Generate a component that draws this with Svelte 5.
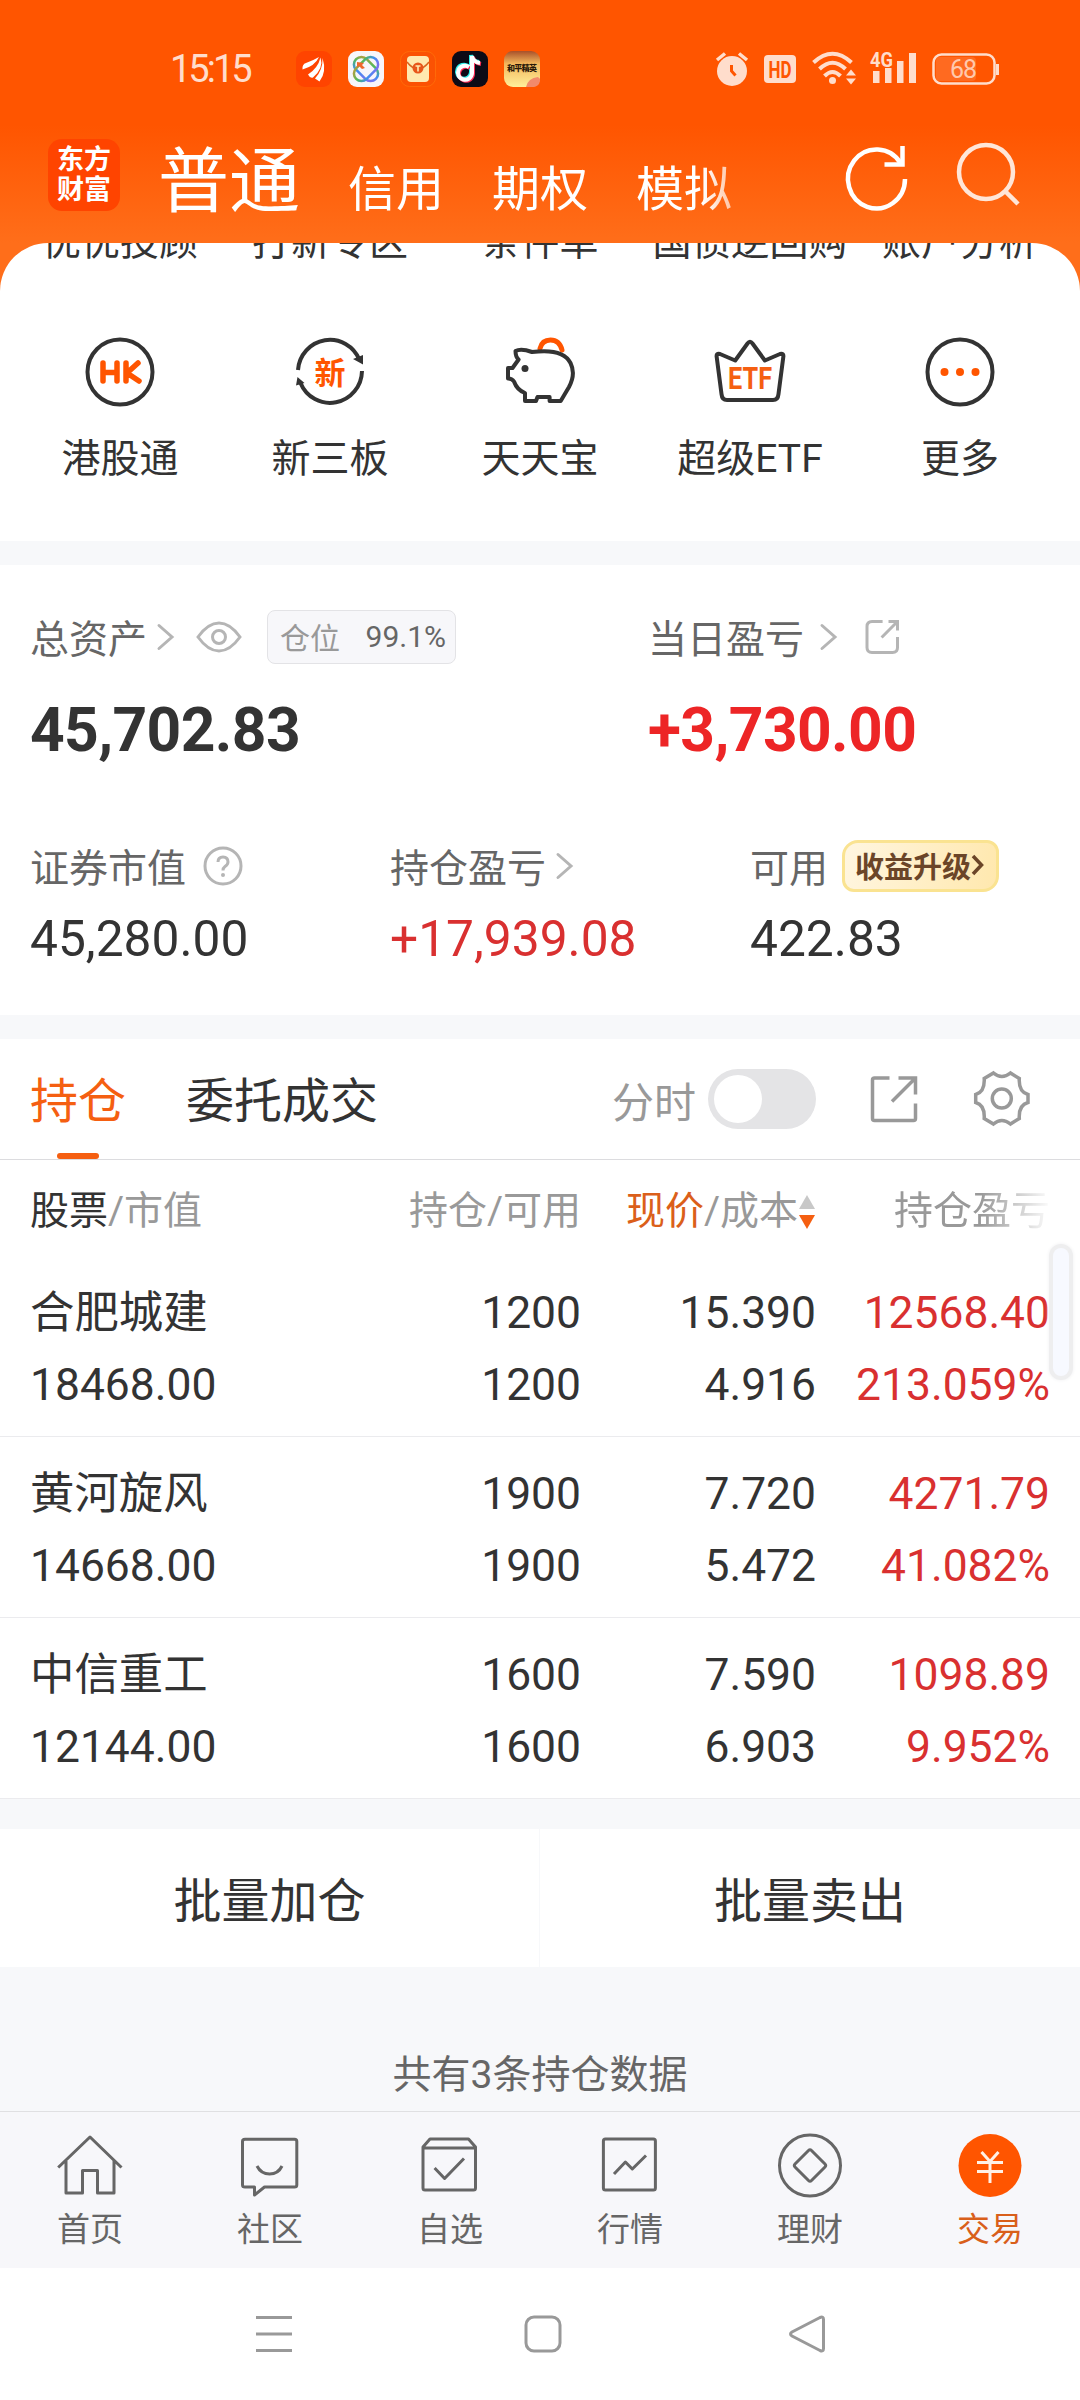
<script>
	const accounts = ['普通', '信用', '期权', '模拟'];
	const hiddenShortcuts = ['优优投顾', '打新专区', '条件单', '国债逆回购', '账户分析'];

	const shortcuts = [
		{ icon: 'hk', label: '港股通' },
		{ icon: 'xin', label: '新三板' },
		{ icon: 'pig', label: '天天宝' },
		{ icon: 'etf', label: '超级ETF' },
		{ icon: 'more', label: '更多' }
	];

	const holdings = [
		{ name: '合肥城建', value: '18468.00', held: 1200, usable: 1200, price: '15.390', cost: '4.916', profit: '12568.40', rate: '213.059%' },
		{ name: '黄河旋风', value: '14668.00', held: 1900, usable: 1900, price: '7.720', cost: '5.472', profit: '4271.79', rate: '41.082%' },
		{ name: '中信重工', value: '12144.00', held: 1600, usable: 1600, price: '7.590', cost: '6.903', profit: '1098.89', rate: '9.952%' }
	];

	const tabs = [
		{ icon: 'home', label: '首页' },
		{ icon: 'chat', label: '社区' },
		{ icon: 'pick', label: '自选' },
		{ icon: 'market', label: '行情' },
		{ icon: 'wealth', label: '理财' },
		{ icon: 'trade', label: '交易' }
	];

	let activeAccount = $state('普通');
	let activeTab = $state('trade');
</script>

{#snippet chevron()}
	<svg class="chevron" width="18" height="28" viewBox="0 0 18 28">
		<path d="M2 2.5L15 14L2 25.5" />
	</svg>
{/snippet}

<main>
	<div class="top">
		<div class="status">
			<span class="time">15:15</span>
			<div class="apps">
				<svg width="36" height="36" viewBox="0 0 36 36">
					<rect width="36" height="36" rx="9" fill="#ff4400" />
					<path d="M6.500 18.500Q6 13 10 12Q18 9 23 6Q19 15 6.500 18.500ZM12 23.500Q22 17 24.500 6.500Q28 17 17 26.500Q14 27.500 12 23.500ZM19 27.500Q27 19 26.500 7Q31 21 23.500 30.500Z" fill="#fff" />
				</svg>
				<svg width="36" height="36" viewBox="0 0 36 36">
					<defs>
						<linearGradient id="loop" gradientUnits="userSpaceOnUse" x1="10" y1="4" x2="24" y2="32">
							<stop offset="0" stop-color="#ff8a2e" />
							<stop offset="0.35" stop-color="#52b95a" />
							<stop offset="0.65" stop-color="#3f8df0" />
							<stop offset="1" stop-color="#a45cf0" />
						</linearGradient>
					</defs>
					<rect width="36" height="36" rx="9" fill="#f7f5fa" />
					<g fill="none" stroke="url(#loop)" stroke-width="2.500">
						<rect x="4" y="10.500" width="28" height="15" rx="7.500" transform="rotate(45 18 18)" />
						<rect x="4" y="10.500" width="28" height="15" rx="7.500" transform="rotate(-45 18 18)" />
					</g>
					<path d="M9 11L16 12L14 14L17 17L14 18L11 15L9 17Z" fill="#f0672c" />
				</svg>
				<svg width="36" height="36" viewBox="0 0 36 36">
					<rect x="0.5" y="0.5" width="35" height="35" rx="9" fill="#fb5203" stroke="#ff6a08" />
					<rect x="7" y="5" width="22" height="26" rx="4" fill="#ffe9b0" />
					<path d="M7 11Q18 25 29 11" fill="none" stroke="#d9641f" stroke-width="1.5" />
					<circle cx="18" cy="17" r="5.5" fill="#e8561b" />
					<path d="M15.5 15H20.5M18 15V20.5" stroke="#ffe9b0" stroke-width="1.6" />
				</svg>
				<svg width="36" height="36" viewBox="0 0 36 36">
					<rect width="36" height="36" rx="9" fill="#0d0b16" />
					<g fill="none" stroke-width="4">
						<path d="M17 16A7 7 0 1 0 20 22V5Q21 11 28 12" stroke="#2ef0ea" transform="translate(-1 -1)" />
						<path d="M17 16A7 7 0 1 0 20 22V5Q21 11 28 12" stroke="#fb2c55" transform="translate(1 1)" />
						<path d="M17 16A7 7 0 1 0 20 22V5Q21 11 28 12" stroke="#fff" />
					</g>
				</svg>
				<svg width="36" height="36" viewBox="0 0 36 36">
					<defs>
						<linearGradient id="game" x1="0" y1="0" x2="0" y2="1">
							<stop offset="0" stop-color="#a8502a" />
							<stop offset="0.35" stop-color="#f3b65c" />
							<stop offset="1" stop-color="#fff09a" />
						</linearGradient>
					</defs>
					<rect width="36" height="36" rx="9" fill="url(#game)" />
					<path d="M22 36Q24 27 34 26L36 28V30Q35 36 28 36Z" fill="#f28a6c" />
					<text x="3" y="20" class="game" textLength="30">和平精英</text>
				</svg>
			</div>
			<div class="signals">
				<svg width="32" height="36" viewBox="0 0 32 36">
					<circle cx="16" cy="20" r="15" fill="#ffddcc" />
					<path d="M1 9L9 2.5M31 9L23 2.5" stroke="#ffddcc" stroke-width="3.5" />
					<path d="M15.500 14V20L19.500 24.500" fill="none" stroke="#ff5500" stroke-width="3" />
				</svg>
				<svg class="hd" width="32" height="36" viewBox="0 0 32 36">
					<rect y="4" width="32" height="28" rx="4" fill="#ffddcc" />
					<text x="4.500" y="26.500" class="hd-text" textLength="23" lengthAdjust="spacingAndGlyphs">HD</text>
				</svg>
				<svg class="wifi" width="45" height="36" viewBox="0 0 45 36">
					<g fill="none" stroke="#ffddcc" stroke-width="4">
						<path d="M1.500 11.500Q20.500 -6 39.500 11.500" />
						<path d="M7.500 18Q20.500 5.500 33.500 18" />
						<path d="M12.500 25Q20.500 17 28.500 25" />
					</g>
					<circle cx="20.500" cy="29.500" r="3.500" fill="#ffddcc" />
					<path d="M34 24.500L39 18.500L44 24.500ZM34 27.500L39 33.500L44 27.500Z" fill="#ffddcc" />
				</svg>
				<svg width="46" height="36" viewBox="0 0 46 36">
					<text x="0" y="15.500" class="net" textLength="23" lengthAdjust="spacingAndGlyphs">4G</text>
					<path d="M3 20H9.500V32H3ZM15 17H21.500V32H15ZM27 10H33.500V32H27ZM39 2H46V32H39Z" fill="#ffddcc" />
				</svg>
				<svg width="67" height="36" viewBox="0 0 67 36">
					<rect x="4" y="6" width="40" height="24" rx="4" fill="#ff6a20" />
					<rect x="1.500" y="3.500" width="61" height="29" rx="8" fill="none" stroke="#ffddcc" stroke-width="2.500" />
					<path d="M65.500 13V24" stroke="#ffddcc" stroke-width="3" />
					<text x="18" y="27" class="battery" textLength="27">68</text>
				</svg>
			</div>
		</div>

		<header>
			<div class="logo">东方<br />财富</div>
			<nav class="accounts">
				{#each accounts as account}
					<button class="account" class:active={account === activeAccount} onclick={() => (activeAccount = account)}>{account}</button>
				{/each}
			</nav>
			<svg width="66" height="66" viewBox="0 0 66 66" class="refresh">
				<path d="M57.500 20A28.500 29.500 0 1 0 62 36" />
				<path d="M59.500 3V21.500H41.500" />
			</svg>
			<svg width="66" height="66" viewBox="0 0 66 66" class="search">
				<circle cx="29" cy="29" r="27" />
				<path d="M48 48L61 61" />
			</svg>
		</header>

		<section class="sheet">
			<div class="grid clipped">
				{#each hiddenShortcuts as label}
					<span>{label}</span>
				{/each}
			</div>
			<div class="grid">
				{#each shortcuts as item}
					<div class="shortcut">
						<svg width="70" height="70" viewBox="0 0 70 70" fill="none" stroke="#333" stroke-width="4" stroke-linejoin="round">
							{#if item.icon === 'hk'}
								<circle cx="35" cy="35" r="32.500" />
								<path d="M18 26V44M32 26V44M18 35.500H32M41 26V44M53 26L42 36L54 44" stroke="#ff5500" stroke-width="5.500" stroke-linecap="round" />
							{:else if item.icon === 'xin'}
								<path d="M3 33A32 32.500 0 0 1 64.500 23M67 34A32 32.500 0 0 1 5.500 46" />
								<path d="M58 22L68 18V27.500ZM2.500 40L9.500 46L1 48.500Z" fill="#333" stroke="none" />
								<text x="35" y="47" class="xin">新</text>
							{:else if item.icon === 'pig'}
								<path d="M35 11.500Q37 3 45.500 3Q54.500 3 57 13" stroke="#ff5500" stroke-width="5" stroke-linecap="round" />
								<path d="M10.500 14Q16 11 27 15Q58 11 65.500 26Q71 37 64 50L55.700 64H44.600V60H32.500L31 64H20V56Q12 53 9 44.500Q7 41.500 3 41.500V31H7.500L13.600 22.500Q10.500 20 10.500 14Z" />
								<circle cx="20" cy="31.500" r="3.500" fill="#333" stroke="none" />
							{:else if item.icon === 'etf'}
								<path d="M5 17L20.200 23.500L32.500 6.500Q35 3 37.500 6.500L49.900 23.500L65 17Q69 16 68.300 20L63.500 57Q63 63 58 63H12Q7 63 6.500 57L1.700 20Q1 16 5 17Z" />
								<text x="13" y="52" class="etf" textLength="44" lengthAdjust="spacingAndGlyphs">ETF</text>
							{:else}
								<circle cx="35" cy="35" r="32.500" />
								<g fill="#ff5500" stroke="none">
									<circle cx="19.500" cy="35" r="4" />
									<circle cx="35" cy="35" r="4" />
									<circle cx="50.500" cy="35" r="4" />
								</g>
							{/if}
						</svg>
						<span>{item.label}</span>
					</div>
				{/each}
			</div>
		</section>
	</div>

	<section class="assets">
		<div class="summary">
			<div>
				<div class="label">
					<span>总资产</span>
					{@render chevron()}
					<svg class="eye" width="46" height="34" viewBox="0 0 46 34">
						<path d="M2 17Q12 3 23 3T44 17Q34 31 23 31T2 17Z" />
						<circle cx="23" cy="17" r="6.500" />
					</svg>
					<span class="position"><i>仓位</i>99.1%</span>
				</div>
				<div class="total">45,702.83</div>
			</div>
			<div>
				<div class="label today">
					<span>当日盈亏</span>
					{@render chevron()}
					<svg class="share" width="35" height="36" viewBox="0 0 35 36">
						<path d="M17.600 2.500H7Q2 2.500 2 7.500V28.500Q2 33.500 7 33.500H27.500Q32.500 33.500 32.500 28.500V18" />
						<path d="M16.600 18.500L31.500 3.500M23.500 2.500H32.500V11.500" />
					</svg>
				</div>
				<div class="total up">+3,730.00</div>
			</div>
		</div>
		<div class="details">
			<div>
				<div class="label">
					<span>证券市值</span>
					<svg class="help" width="40" height="40" viewBox="0 0 40 40">
						<circle cx="20" cy="20" r="18" />
						<path d="M15 16Q15 11 20 11T25 16Q25 18.500 22 20.500Q20 22 20 24.500" />
						<circle class="dot" cx="20" cy="29" r="2" />
					</svg>
				</div>
				<div class="amount">45,280.00</div>
			</div>
			<div>
				<div class="label"><span>持仓盈亏</span>{@render chevron()}</div>
				<div class="amount up">+17,939.08</div>
			</div>
			<div>
				<div class="label">
					<span>可用</span>
					<div class="upgrade">
						收益升级
						<svg width="13" height="22" viewBox="0 0 13 22"><path d="M2 2L10.500 11L2 20" /></svg>
					</div>
				</div>
				<div class="amount">422.83</div>
			</div>
		</div>
	</section>

	<section class="positions">
		<div class="bar">
			<span class="view active">持仓</span>
			<span class="view">委托成交</span>
			<span class="minute">分时</span>
			<span class="toggle"></span>
			<svg class="export" width="48" height="48" viewBox="0 0 48 48">
				<path d="M19.500 3H4.500Q2.500 3 2.500 5V43.500Q2.500 45.500 4.500 45.500H43.500Q45.500 45.500 45.500 43.500V28.500" />
				<path d="M28.500 3H45.500V19.500M22 26.500L44 4.500" />
			</svg>
			<svg class="gear" width="56" height="56" viewBox="0 0 56 56">
				<path d="M19.500 2Q27.800 9 36.400 2L45.300 7.500Q44.500 21 54 23.500V31.500Q44.500 34 45.300 47.500L36.400 53Q27.800 46 19.500 53L10.200 47.500Q11 34 1.700 31.500V23.500Q11 21 10.200 7.500Z" />
				<circle cx="27.800" cy="27.500" r="9.500" />
			</svg>
		</div>

		<div class="row head">
			<span><b>股票</b>/市值</span>
			<span>持仓/可用</span>
			<span class="sort">
				<em>现价</em>/成本
				<svg width="18" height="36" viewBox="0 0 18 36">
					<path d="M1 15L9 1L17 15Z" fill="#c8c8c8" />
					<path d="M1 21L9 35L17 21Z" fill="#f55f11" />
				</svg>
			</span>
			<span class="faded">持仓盈亏</span>
		</div>

		{#each holdings as stock}
			<div class="row holding">
				<div><p>{stock.name}</p><p>{stock.value}</p></div>
				<div><p>{stock.held}</p><p>{stock.usable}</p></div>
				<div><p>{stock.price}</p><p>{stock.cost}</p></div>
				<div class="gain"><p>{stock.profit}</p><p>{stock.rate}</p></div>
			</div>
		{/each}
		<div class="handle"></div>
	</section>

	<div class="batch">
		<button>批量加仓</button>
		<button>批量卖出</button>
	</div>
	<p class="count">共有3条持仓数据</p>

	<nav class="tabs">
		{#each tabs as tab}
			<button class="tab" class:active={tab.icon === activeTab} onclick={() => (activeTab = tab.icon)}>
				<svg width="66" height="66" viewBox="0 0 66 66" fill="none" stroke="#666" stroke-width="3" stroke-linejoin="round">
					{#if tab.icon === 'home'}
						<path d="M1.200 32.500L33 2L64.500 32.500M9 26V58H25.500V35.500H40.500V58H57V26" />
					{:else if tab.icon === 'chat'}
						<path d="M8 4.300H57.500Q59.800 4.300 59.800 6.500V50Q59.800 52 57.500 52H27.500L17.500 60V52H8Q5.500 52 5.500 50V6.500Q5.500 4.300 8 4.300Z" />
						<path d="M20 31Q24 39 32.600 39T45 31" />
					{:else if tab.icon === 'pick'}
						<path d="M13 4H51.500L58.500 12V53Q58.500 55 56.500 55H8Q6 55 6 53V12ZM6 13H58.500M17.600 33L27.600 43.500L47 23.500" />
					{:else if tab.icon === 'market'}
						<rect x="6.400" y="4" width="52" height="51" rx="2" />
						<path d="M17 39L28.400 27L35.300 34L49 20.500" />
					{:else if tab.icon === 'wealth'}
						<circle cx="33" cy="30.500" r="30.500" />
						<path d="M31.500 15.500Q33 14 34.500 15.500L48 29Q49.500 30.500 48 32L34.500 45.500Q33 47 31.500 45.500L18 32Q16.500 30.500 18 29Z" />
					{:else}
						<circle cx="33" cy="30.500" r="31.500" fill="#ff5500" stroke="none" />
						<path d="M24.500 17L33 26.500L41.500 17M33 26V48M20 27.500H46M20 36.500H46" stroke="#fff0e6" />
					{/if}
				</svg>
				{tab.label}
			</button>
		{/each}
	</nav>

	<div class="system">
		<svg width="36" height="38" viewBox="0 0 36 38"><path d="M0 2.500H36M0 19H36M0 35.500H36" /></svg>
		<svg class="home" width="38" height="38" viewBox="0 0 38 38"><rect x="2" y="2" width="34" height="34" rx="8" /></svg>
		<svg width="38" height="38" viewBox="0 0 38 38"><path d="M32 2.500Q35.500 1 35.500 4.500V33.500Q35.500 37 32 35.500L4 21Q1 19 4 17Z" /></svg>
	</div>
</main>

<style>
	:global(body) {
		margin: 0;
		background: #fff;
	}

	main {
		width: 1080px;
		height: 2400px;
		display: flex;
		flex-direction: column;
		overflow: hidden;
		background: #f7f8fa;
		color: #333;
		font-family: Roboto, 'Noto Sans CJK SC', sans-serif;
		font-size: 39px;
		font-weight: 400;
	}

	svg {
		flex: none;
		display: block;
		overflow: visible;
	}

	p {
		margin: 0;
	}

	button {
		padding: 0;
		border: none;
		background: none;
		color: inherit;
		font: inherit;
	}

	.top {
		height: 541px;
		background: linear-gradient(#ff5500 125px, #ff6e1a 243px);
	}

	.status {
		height: 101px;
		padding: 37px 81px 0 170px;
		box-sizing: border-box;
		display: flex;
		align-items: center;
		color: #ffddcc;
	}

	.time {
		width: 126px;
		font-size: 38px;
		letter-spacing: -3px;
	}

	.apps {
		display: flex;
		gap: 16px;
	}

	.signals {
		display: flex;
		gap: 16px;
		margin-left: auto;
	}

	.wifi {
		margin-right: -3px;
	}

	.game {
		font-size: 8px;
		font-weight: 900;
		fill: #2a1808;
	}

	.hd-text {
		font-size: 23px;
		font-weight: 700;
		fill: #ff5500;
	}

	.net {
		font-size: 21px;
		font-weight: 700;
		fill: #ffddcc;
	}

	.battery {
		font-size: 25px;
		fill: #ffc9ad;
	}

	header {
		height: 142px;
		padding: 0 57px 0 48px;
		box-sizing: border-box;
		display: flex;
		align-items: center;
		color: #fff;
	}

	.logo {
		width: 72px;
		height: 72px;
		margin-top: 6px;
		padding-top: 6px;
		box-sizing: border-box;
		border-radius: 14px;
		background: #ff4400;
		font-size: 27px;
		font-weight: 700;
		line-height: 30px;
		text-align: center;
	}

	.accounts {
		width: 590px;
		margin: 20px auto 0 38px;
		display: flex;
		align-items: baseline;
		gap: 48px;
		white-space: nowrap;
		mask-image: linear-gradient(to right, #000 545px, rgba(0, 0, 0, 0.4) 590px);
	}

	.account {
		flex: none;
		font-size: 48px;
		line-height: 70px;
	}

	.account.active {
		font-size: 71px;
		line-height: 110px;
	}

	.refresh {
		margin-top: 8px;
		margin-right: 48px;
		fill: none;
		stroke: #fff;
		stroke-width: 4.5;
	}

	.search {
		margin-top: 8px;
		fill: none;
		stroke: #ffe6d8;
		stroke-width: 4.5;
	}

	.sheet {
		height: 298px;
		border-radius: 48px 48px 0 0;
		background: #fff;
		overflow: hidden;
	}

	.grid {
		padding: 0 15px;
		display: grid;
		grid-template-columns: repeat(5, 210px);
		text-align: center;
		white-space: nowrap;
		line-height: 40px;
	}

	.clipped {
		margin: -21px 0 75px;
	}

	.clipped span {
		margin: 0 -10px;
	}

	.shortcut {
		display: flex;
		flex-direction: column;
		align-items: center;
		gap: 32px;
	}

	.xin {
		font-size: 31px;
		font-weight: 700;
		fill: #ff5500;
		stroke: none;
		text-anchor: middle;
	}

	.etf {
		font-size: 32px;
		font-weight: 700;
		fill: #f55f11;
		stroke: none;
	}

	.assets {
		height: 450px;
		margin-top: 24px;
		padding: 45px 30px 0;
		box-sizing: border-box;
		background: #fff;
	}

	.summary {
		display: grid;
		grid-template-columns: 618px 1fr;
	}

	.label {
		height: 54px;
		display: flex;
		align-items: center;
		color: #666;
		white-space: nowrap;
	}

	.label > span:first-child {
		padding-bottom: 3px;
	}

	.chevron {
		margin-left: 10px;
		fill: none;
		stroke: #b5b5b5;
		stroke-width: 3;
		stroke-linecap: round;
	}

	.today .chevron {
		margin-left: 16px;
	}

	.eye {
		margin-left: 21px;
	}

	.share {
		margin-left: 27px;
	}

	.help {
		margin-left: 17px;
	}

	.eye,
	.share,
	.help {
		fill: none;
		stroke: #b5b5b5;
		stroke-width: 3;
	}

	.help .dot {
		fill: #b5b5b5;
		stroke: none;
	}

	.position {
		width: 189px;
		height: 54px;
		margin-left: 25px;
		padding: 0 9px 2px 12px;
		box-sizing: border-box;
		display: flex;
		align-items: center;
		justify-content: space-between;
		border: 1px solid #e3e3e6;
		border-radius: 8px;
		background: #f7f7fa;
		font-size: 30px;
	}

	.position i {
		color: #999;
		font-style: normal;
	}

	.total {
		margin-top: 32px;
		font-size: 60.5px;
		font-weight: 700;
		letter-spacing: -0.6px;
		line-height: 70px;
	}

	.total.up {
		color: #ed2526;
	}

	.amount.up,
	.gain {
		color: #d93030;
	}

	.details {
		margin-top: 73px;
		display: grid;
		grid-template-columns: 360px 360px 1fr;
	}

	.amount {
		margin-top: 16px;
		font-size: 49.7px;
		line-height: 61px;
	}

	.upgrade {
		width: 157px;
		height: 52px;
		margin-left: 14px;
		padding: 0 0 2px 10px;
		box-sizing: border-box;
		display: flex;
		align-items: center;
		border: 3px solid #fae391;
		border-radius: 16px 12px 16px 12px;
		background: linear-gradient(100deg, #fff6e0, #ffe8ae);
		color: #6b4528;
		font-size: 29px;
		font-weight: 700;
	}

	.upgrade svg {
		fill: none;
		stroke: #6b4528;
		stroke-width: 3.5;
	}

	.positions {
		position: relative;
		margin-top: 24px;
		background: #fff;
	}

	.bar {
		height: 121px;
		padding: 0 50px 0 30px;
		box-sizing: border-box;
		display: flex;
		align-items: center;
		border-bottom: 1px solid #dcdcdf;
	}

	.view {
		height: 120px;
		margin-right: 60px;
		font-size: 48px;
		line-height: 125px;
	}

	.view.active {
		position: relative;
		color: #f55f11;
	}

	.view.active::after {
		content: '';
		position: absolute;
		left: 27px;
		bottom: 0;
		width: 42px;
		height: 6px;
		border-radius: 3px;
		background: #f55f11;
	}

	.minute {
		margin-left: auto;
		color: #999;
		font-size: 42px;
	}

	.toggle {
		width: 108px;
		height: 60px;
		margin: 0 54px 0 12px;
		padding: 6px;
		box-sizing: border-box;
		border-radius: 30px;
		background: #e4e4e6;
	}

	.toggle::before {
		content: '';
		display: block;
		width: 48px;
		height: 48px;
		border-radius: 50%;
		background: #fff;
	}

	.export,
	.gear {
		fill: none;
		stroke: #999;
		stroke-width: 3.5;
	}

	.gear {
		margin-left: 56px;
	}

	.row {
		padding: 0 30px;
		display: grid;
		grid-template-columns: 301px 250px 235px 234px;
		text-align: right;
		white-space: nowrap;
	}

	.row > :first-child {
		text-align: left;
	}

	.head {
		height: 96px;
		color: #999;
		line-height: 102px;
	}

	.head b {
		color: #333;
		font-weight: 400;
	}

	.head em {
		color: #db5f1a;
		font-style: normal;
	}

	.sort {
		display: flex;
		align-items: center;
		justify-content: flex-end;
	}

	.sort svg {
		margin-top: 2px;
	}

	.faded {
		mask-image: linear-gradient(to right, #000 165px, transparent 236px);
	}

	.holding {
		height: 181px;
		padding-top: 21px;
		box-sizing: border-box;
		border-bottom: 1px solid #ebebee;
		font-size: 44.4px;
		line-height: 72px;
	}

	/* floating edge grip, sits over the table */
	.handle {
		position: absolute;
		top: 209px;
		right: 11px;
		width: 16px;
		height: 128px;
		border-radius: 8px;
		background: #f7f9ff;
		box-shadow: 0 0 0 4px #eeeeef, 0 0 3px 5px #f6f6f7;
	}

	.batch {
		height: 138px;
		margin-top: 30px;
		display: grid;
		grid-template-columns: 539px 540px;
		gap: 1px;
		font-size: 48px;
	}

	.batch button {
		padding-bottom: 2px;
		background: #fff;
	}

	.count {
		margin-top: 77px;
		color: #666;
		line-height: 62px;
		text-align: center;
	}

	.tabs {
		height: 157px;
		margin-top: auto;
		box-sizing: border-box;
		flex: none;
		display: grid;
		grid-template-columns: repeat(6, 180px);
		border-top: 1px solid #e0e0e2;
		background: #f7f7fa;
		color: #666;
	}

	.tab {
		padding-top: 23px;
		display: flex;
		flex-direction: column;
		align-items: center;
		gap: 9px;
		font-size: 33px;
		line-height: 40px;
	}

	.tab.active {
		color: #d95f1a;
	}

	.system {
		height: 132px;
		flex: none;
		padding: 0 254px 0 256px;
		box-sizing: border-box;
		display: flex;
		align-items: center;
		justify-content: space-between;
		background: #fff;
	}

	.system svg {
		fill: none;
		stroke: #999;
		stroke-width: 3;
	}

	.system .home {
		margin-left: 5px;
	}
</style>
